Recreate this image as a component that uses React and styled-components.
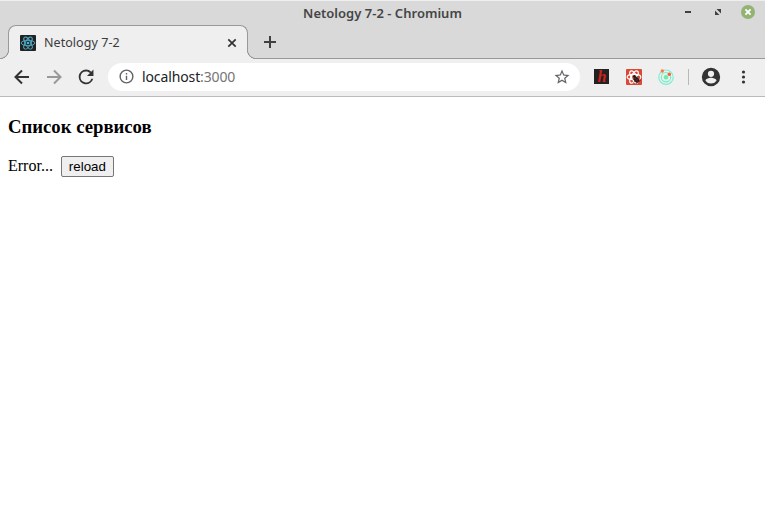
import React from 'react';
import styled, { createGlobalStyle } from 'styled-components';

const GlobalStyle = createGlobalStyle`
  * { box-sizing: border-box; }
  body { margin: 0; background: #fff; overflow: hidden; }
  svg { display: block; flex: none; }
`;

const Window = styled.div`
  display: flex;
  flex-direction: column;
  width: 765px;
  height: 509px;
  background: #fff;
`;

const TitleBar = styled.header`
  display: grid;
  grid-template-columns: 1fr auto 1fr;
  align-items: center;
  height: 25px;
  padding: 0 10px;
  background: #d9d9d9;
  border-top: 1px solid #efefef;
`;

const Title = styled.h1`
  grid-column: 2;
  margin: 0;
  font: 600 13px/24px "Noto Sans", sans-serif;
  letter-spacing: 0.02px;
  color: #454545;
  white-space: nowrap;
`;

const WindowControls = styled.div`
  display: flex;
  justify-content: flex-end;
  align-items: center;
  gap: 16px;
  padding-bottom: 2px;
`;

const TabStrip = styled.nav`
  display: flex;
  height: 34px;
  padding-left: 8px;
  background: #d9d9d9;
  border-bottom: 1px solid #999;
`;

const Tab = styled.div`
  position: relative;
  display: flex;
  align-items: center;
  width: 240px;
  height: 34px;
  padding: 0 10px 0 11px;
  background: #efefef;
  border: 1px solid #999;
  border-bottom: 0;
  border-radius: 8px 8px 0 0;

  &::before,
  &::after {
    content: '';
    position: absolute;
    bottom: 0;
    width: 9px;
    height: 9px;
  }
  &::before {
    left: -9px;
    background: radial-gradient(circle at 0 0, #d9d9d9 7.7px, #999 8.2px, #999 8.8px, #efefef 9.3px);
  }
  &::after {
    right: -9px;
    background: radial-gradient(circle at 100% 0, #d9d9d9 7.7px, #999 8.2px, #999 8.8px, #efefef 9.3px);
  }
`;

const TabTitle = styled.span`
  flex: 1;
  margin-left: 8px;
  font: 12.5px/32px "Noto Sans", sans-serif;
  letter-spacing: 0.05px;
  color: #3c3c3c;
`;

const NewTab = styled.div`
  display: flex;
  align-items: center;
  padding-left: 15px;
`;

const Toolbar = styled.div`
  display: flex;
  align-items: center;
  height: 38px;
  padding: 0 13px 2px 14px;
  background: #efefef;
  border-bottom: 1px solid #bababa;
`;

const Navigation = styled.div`
  display: flex;
  flex: none;
  align-items: center;
  gap: 16px;
  width: 94px;
`;

const AddressBar = styled.div`
  display: flex;
  flex: none;
  align-items: center;
  width: 472px;
  height: 28px;
  padding: 0 9px 0 10px;
  border-radius: 14px;
  background: #fff;
`;

const Address = styled.span`
  flex: 1;
  margin-left: 7px;
  font: 14px/28px "Noto Sans", sans-serif;
  letter-spacing: -0.12px;
  color: #202124;
`;

const Port = styled.span`
  color: #757575;
`;

const Extensions = styled.div`
  display: flex;
  align-items: center;
  gap: 16px;
  margin-left: 13px;
`;

const Divider = styled.span`
  width: 1px;
  height: 16px;
  margin: 0 11px 0 14px;
  background: #b8b8b8;
`;

const MenuSlot = styled.span`
  margin-left: 14px;
`;

const Page = styled.main`
  padding: 19px 8px 0;
  font: 16px "Liberation Serif", serif;
  color: #000;
`;

const Heading = styled.h3`
  margin: 0 0 18px;
  font-size: 18.72px;
  line-height: 22px;
`;

const Status = styled.div`
  display: flex;
  align-items: baseline;
  gap: 8px;
`;

const Reload = styled.button`
  width: 53px;
  height: 21px;
  padding: 0;
  border: 1px solid #767676;
  border-radius: 2px;
  background: #efefef;
  font: 13.333px "Liberation Sans", sans-serif;
  color: #000;
`;

const ExtensionLetter = styled.text`
  font: italic bold 16px "Liberation Serif", serif;
  fill: #cf211c;
`;

const Atom = ({ color, width = 0.9 }) => (
  <g stroke={color} strokeWidth={width} fill="none">
    {[30, 90, 150].map((a) => (
      <ellipse key={a} cx="8" cy="8" rx="6.8" ry="2.7" transform={`rotate(${a - 30} 8 8)`} />
    ))}
    <circle cx="8" cy="8" r="1.3" fill={color} stroke="none" />
  </g>
);

const Favicon = () => (
  <svg width="16" height="16" viewBox="0 0 16 16">
    <rect width="16" height="16" rx="1" fill="#222" />
    <Atom color="#4fb3cf" />
  </svg>
);

const Material = ({ size, color, d }) => (
  <svg width={size} height={size} viewBox="0 0 24 24" fill={color}><path d={d} /></svg>
);

const BackIcon = () => (
  <svg width="16" height="16" viewBox="0 0 16 16" fill="none" stroke="#333" strokeWidth="2">
    <path d="M15 8H2M8 1.5 1.5 8 8 14.5" />
  </svg>
);

const ForwardIcon = () => (
  <svg width="16" height="16" viewBox="0 0 16 16" fill="none" stroke="#999" strokeWidth="2">
    <path d="M1 8h13M8 1.5 14.5 8 8 14.5" />
  </svg>
);

const ReloadIcon = () => (
  <svg width="16" height="16" viewBox="3.2 3.4 17.4 17.4" fill="#333">
    <path d="M17.65 6.35A7.95 7.95 0 0 0 12 4a8 8 0 1 0 7.73 10h-2.08A6 6 0 1 1 12 6c1.66 0 3.14.69 4.22 1.78L13 11h7V4z" />
  </svg>
);

export default function App() {
  return (
    <Window>
      <GlobalStyle />
      <TitleBar>
        <Title>Netology 7-2 - Chromium</Title>
        <WindowControls>
          <svg width="14" height="14" viewBox="0 0 14 14"><path d="M4 6h6v2H4z" fill="#404040" /></svg>
          <svg width="14" height="14" viewBox="0 0 14 14" fill="#404040">
            <path d="M5.5 4H10v4.5zM4 5.5V10h4.5z" />
          </svg>
          <svg width="14" height="14" viewBox="0 0 14 14">
            <circle cx="7" cy="7" r="7" fill="#92b372" />
            <path d="m4.4 4.4 5.2 5.2m0-5.2L4.4 9.6" stroke="#fff" strokeWidth="1.8" />
          </svg>
        </WindowControls>
      </TitleBar>
      <TabStrip>
        <Tab>
          <Favicon />
          <TabTitle>Netology 7-2</TabTitle>
          <svg width="10" height="10" viewBox="0 0 10 10" stroke="#333" strokeWidth="1.7">
            <path d="m1.3 1.3 7.4 7.4m0-7.4L1.3 8.7" />
          </svg>
        </Tab>
        <NewTab>
          <svg width="14" height="14" viewBox="0 0 14 14" stroke="#404040" strokeWidth="2">
            <path d="M7 1v12M1 7h12" />
          </svg>
        </NewTab>
      </TabStrip>
      <Toolbar>
        <Navigation>
          <BackIcon />
          <ForwardIcon />
          <ReloadIcon />
        </Navigation>
        <AddressBar>
          <Material size={17} color="#5f6368" d="M11 7h2v2h-2zm0 4h2v6h-2zm1-9a10 10 0 1 0 0 20 10 10 0 0 0 0-20m0 18a8 8 0 1 1 0-16 8 8 0 0 1 0 16" />
          <Address>localhost<Port>:3000</Port></Address>
          <Material size={18} color="#5f6368" d="m22 9.24-7.19-.62L12 2 9.19 8.63 2 9.24l5.46 4.73L5.82 21 12 17.27 18.18 21l-1.63-7.03zM12 15.4l-3.76 2.27 1-4.28-3.32-2.88 4.38-.38L12 6.1l1.71 4.04 4.38.38-3.32 2.88 1 4.28z" />
        </AddressBar>
        <Extensions>
          <svg width="17" height="16" viewBox="0 0 17 16">
            <path d="M1 0h15v15H1z" fill="#222" />
            <ExtensionLetter x="4.5" y="13">h</ExtensionLetter>
          </svg>
          <svg width="16" height="16" viewBox="0 0 16 16">
            <rect width="16" height="16" rx="1" fill="#dc4837" />
            <Atom color="#fff" width={1.25} />
            <g transform="rotate(-35 10 10)">
              <ellipse cx="10" cy="10.8" rx="2.5" ry="3.3" fill="#271a19" />
              <circle cx="10" cy="7.2" r="1.5" fill="#271a19" />
              <path d="M6.4 9h7.2M6 11.3h8M7 13.8h6M10 8v6" stroke="#612b27" strokeWidth=".7" />
            </g>
          </svg>
          <svg width="16" height="16" viewBox="0 0 16 16" fill="none">
            <circle cx="8" cy="8.2" r="7.2" stroke="#77f0d4" strokeWidth="1.2" />
            <circle cx="8" cy="8.2" r="4.7" stroke="#77f0c0" strokeWidth="1.2" />
            <circle cx="8" cy="8.2" r="2.3" fill="#65efae" />
            <circle cx="4.3" cy="2" r="1.7" fill="#ff7744" />
            <circle cx="11.3" cy="5.2" r="1.7" fill="#ff5b38" />
          </svg>
        </Extensions>
        <Divider />
        <Material size={22} color="#333" d="M12 2a10 10 0 1 0 0 20 10 10 0 0 0 0-20m0 3.1a3.4 3.4 0 1 1 0 6.8 3.4 3.4 0 0 1 0-6.8m0 14.1a7.2 7.2 0 0 1-6-3.2c0-2 4-3.1 6-3.1s6 1.1 6 3.1a7.2 7.2 0 0 1-6 3.2" />
        <MenuSlot>
          <svg width="16" height="16" viewBox="0 0 16 16" fill="#333">
            <circle cx="7.5" cy="3" r="1.6" /><circle cx="7.5" cy="8" r="1.6" /><circle cx="7.5" cy="13" r="1.6" />
          </svg>
        </MenuSlot>
      </Toolbar>
      <Page>
        <Heading>Список сервисов</Heading>
        <Status>Error... <Reload type="button">reload</Reload></Status>
      </Page>
    </Window>
  );
}
